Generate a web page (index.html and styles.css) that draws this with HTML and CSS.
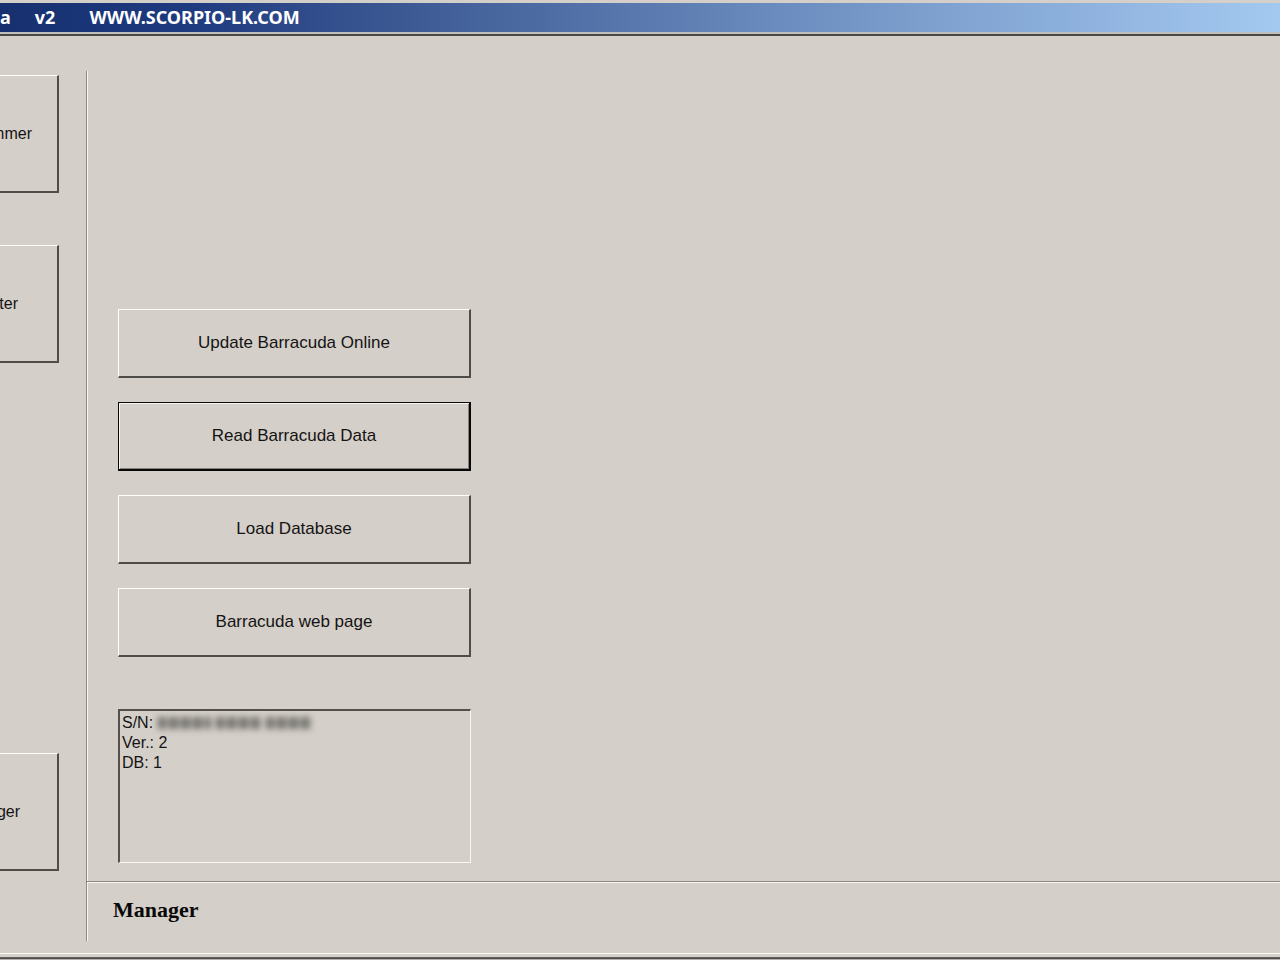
FILE: index.html
```html
<!DOCTYPE html>
<html lang="en">
<head>
<meta charset="utf-8">
<meta name="viewport" content="width=device-width, initial-scale=1">
<title>WWW.SCORPIO-LK.COM</title>
<link rel="stylesheet" href="styles.css">
</head>
<body>
<div class="window">
  <header class="titlebar">
    <span>a</span>
    <span>v2</span>
    <span class="site">WWW.SCORPIO-LK.COM</span>
  </header>
  <div class="client">
    <nav class="sidebar">
      <button type="button" class="btn tab tab-mmer">mmer</button>
      <button type="button" class="btn tab tab-ter">ter</button>
      <button type="button" class="btn tab tab-ger">ger</button>
    </nav>
    <div class="content">
      <main class="panel">
        <div class="actions">
          <button type="button" class="btn action">Update Barracuda Online</button>
          <button type="button" class="btn action is-default">Read Barracuda Data</button>
          <button type="button" class="btn action">Load Database</button>
          <button type="button" class="btn action">Barracuda web page</button>
        </div>
        <div class="info">
          <div class="row">S/N: <span class="redacted"><i class="long"></i><i></i><i></i></span></div>
          <div class="row">Ver.: 2</div>
          <div class="row">DB: 1</div>
        </div>
      </main>
      <footer class="status"><h1>Manager</h1></footer>
    </div>
  </div>
  <div class="frame"></div>
</div>
</body>
</html>
```

FILE: styles.css
```css
* { box-sizing: border-box; }

body {
  margin: 0;
  background: #d4cfc8;
  color: #141414;
  font: 17px/20px "Liberation Sans", Arial, sans-serif;
}

.window {
  display: flex;
  flex-direction: column;
  min-height: 100vh;
  overflow: hidden;
}

.titlebar {
  display: flex;
  align-items: flex-start;
  gap: 24px;
  height: 36px;
  border-top: 3px solid #d4cfc8;
  border-bottom: 2px solid #4a4947;
  background: linear-gradient(#0000 29px, #c0c0be 29px), linear-gradient(90deg, #16306f, #1f3b80 15%, #37538f 28%, #7c9fce 72%, #a4c9f0);
  color: #fff;
  font: bold 18px/29px "Noto Sans", Tahoma, sans-serif;
}

.site { margin-left: 10px; }

.client {
  display: flex;
  flex: 1;
  padding: 35px 0 12px;
}

.btn {
  display: block;
  padding: 0;
  border: 2px solid;
  border-color: #fffefa #4f4d4a #4f4d4a #fffefa;
  border-top-width: 1px;
  border-left-width: 1px;
  border-radius: 0;
  background: none;
  color: inherit;
  font: inherit;
}

.sidebar {
  display: flex;
  flex-direction: column;
  gap: 52px;
  width: 86px;
  padding: 4px 27px 70px 0;
}

.tab {
  display: flex;
  align-items: center;
  justify-content: flex-end;
  height: 118px;
  border-left: 0;
  overflow: hidden;
  font-size: 16px;
}

.tab-mmer { padding-right: 25px; }
.tab-ter { padding-right: 39px; }
.tab-ger { margin-top: auto; padding-right: 37px; }

.content {
  display: flex;
  flex: 1;
  flex-direction: column;
  border-left: 1px solid #8a8883;
  box-shadow: inset 1px 0 #faf8f3;
}

.panel {
  display: flex;
  flex: 1;
  flex-direction: column;
  justify-content: flex-end;
  gap: 52px;
  padding: 0 31px 18px;
}

.actions {
  display: grid;
  gap: 24px;
  max-width: 353px;
}

.action { height: 69px; }

.btn.is-default {
  border-color: #080808;
  box-shadow: inset 1px 1px #f7f5ef, inset -1px -1px #85827d;
}

.info {
  max-width: 353px;
  min-height: 154px;
  padding: 2px;
  border: 2px solid;
  border-color: #54504e #faf8f3 #faf8f3 #54504e;
  border-right-width: 1px;
  border-bottom-width: 1px;
  font-size: 16px;
}

.row {
  display: flex;
  gap: 5px;
}

.redacted {
  display: flex;
  align-items: center;
  gap: 5px;
  filter: blur(3px);
}

.redacted i {
  width: 45px;
  height: 12px;
  background: repeating-linear-gradient(90deg, #716f6b 0 7px, #a5a29c 7px 12px);
}

.redacted .long { width: 53px; }

.status {
  padding: 17px 26px 21px;
  border-top: 1px solid #8a8883;
  box-shadow: inset 0 1px #faf8f3;
}

.status h1 {
  margin: 0;
  color: #080808;
  font: bold 22px/21px "Liberation Serif", "Times New Roman", serif;
}

.frame {
  height: 7px;
  border-top: 1px solid #faf8f3;
  background: linear-gradient(#d4cfc8 3px, #6b6967 3px, #454341 5px, #b5b0ab 5px);
}
```
